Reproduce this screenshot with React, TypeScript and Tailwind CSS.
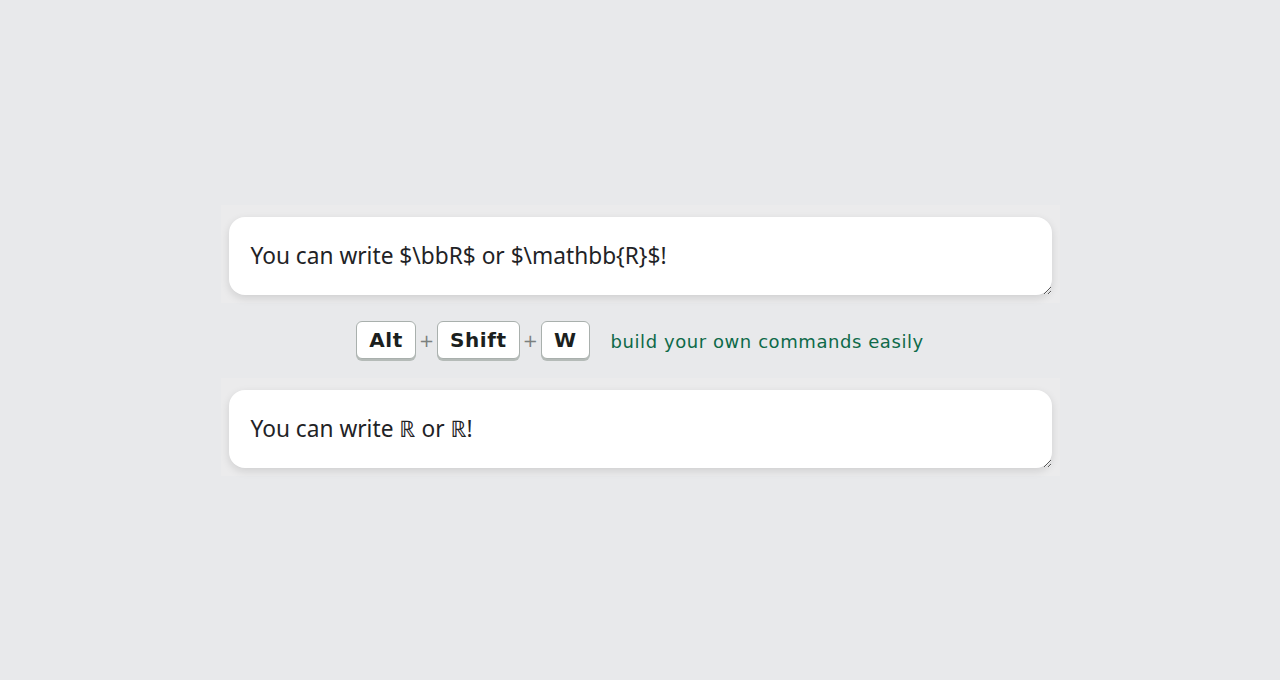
import { useState } from 'react'

function Key({ label }: { label: string }) {
  return (
    <kbd className="inline-flex h-[38px] items-center rounded-[6px] border border-[#a9b0ad] bg-white px-3 text-[20px] font-bold tracking-[0.6px] text-[#1b1f1e] shadow-[0_2px_0_#b5bbb8] [font-family:'DejaVu_Sans',sans-serif]">
      {label}
    </kbd>
  )
}

function Plus() {
  return (
    <span className="mx-[3px] text-[18px] text-[#7b807e] [font-family:'DejaVu_Sans',sans-serif]">+</span>
  )
}

function Box({ value, onChange }: { value: string; onChange?: (v: string) => void }) {
  return (
    <div className="bg-[#ebebec] px-2 pb-2 pt-3">
      <textarea
        value={value}
        onChange={(e) => onChange?.(e.target.value)}
        rows={1}
        spellCheck={false}
        className="block h-[78px] w-full resize-y rounded-2xl bg-white px-[22px] pt-[24px] text-[22.7px] leading-[30px] text-[#1f2326] shadow-[0_3px_8px_rgba(0,0,0,0.12)] outline-none [font-family:'Noto_Sans',sans-serif]"
      />
    </div>
  )
}

export default function App() {
  const [src, setSrc] = useState('You can write $\\bbR$ or $\\mathbb{R}$!')
  const out = src.replace(/\$\\bbR\$/g, 'ℝ').replace(/\$\\mathbb\{R\}\$/g, 'ℝ')

  return (
    <div className="flex min-h-screen items-center justify-center bg-[#e8e9eb]">
      <div className="w-[839px]">
        <Box value={src} onChange={setSrc} />
        <div className="flex h-[75px] items-center justify-center">
          <Key label="Alt" />
          <Plus />
          <Key label="Shift" />
          <Plus />
          <Key label="W" />
          <span className="ml-[21px] pt-[3px] text-[18px] tracking-[0.57px] text-[#0e6a49] [font-family:'DejaVu_Sans',sans-serif]">
            build your own commands easily
          </span>
        </div>
        <Box value={out} />
      </div>
    </div>
  )
}
